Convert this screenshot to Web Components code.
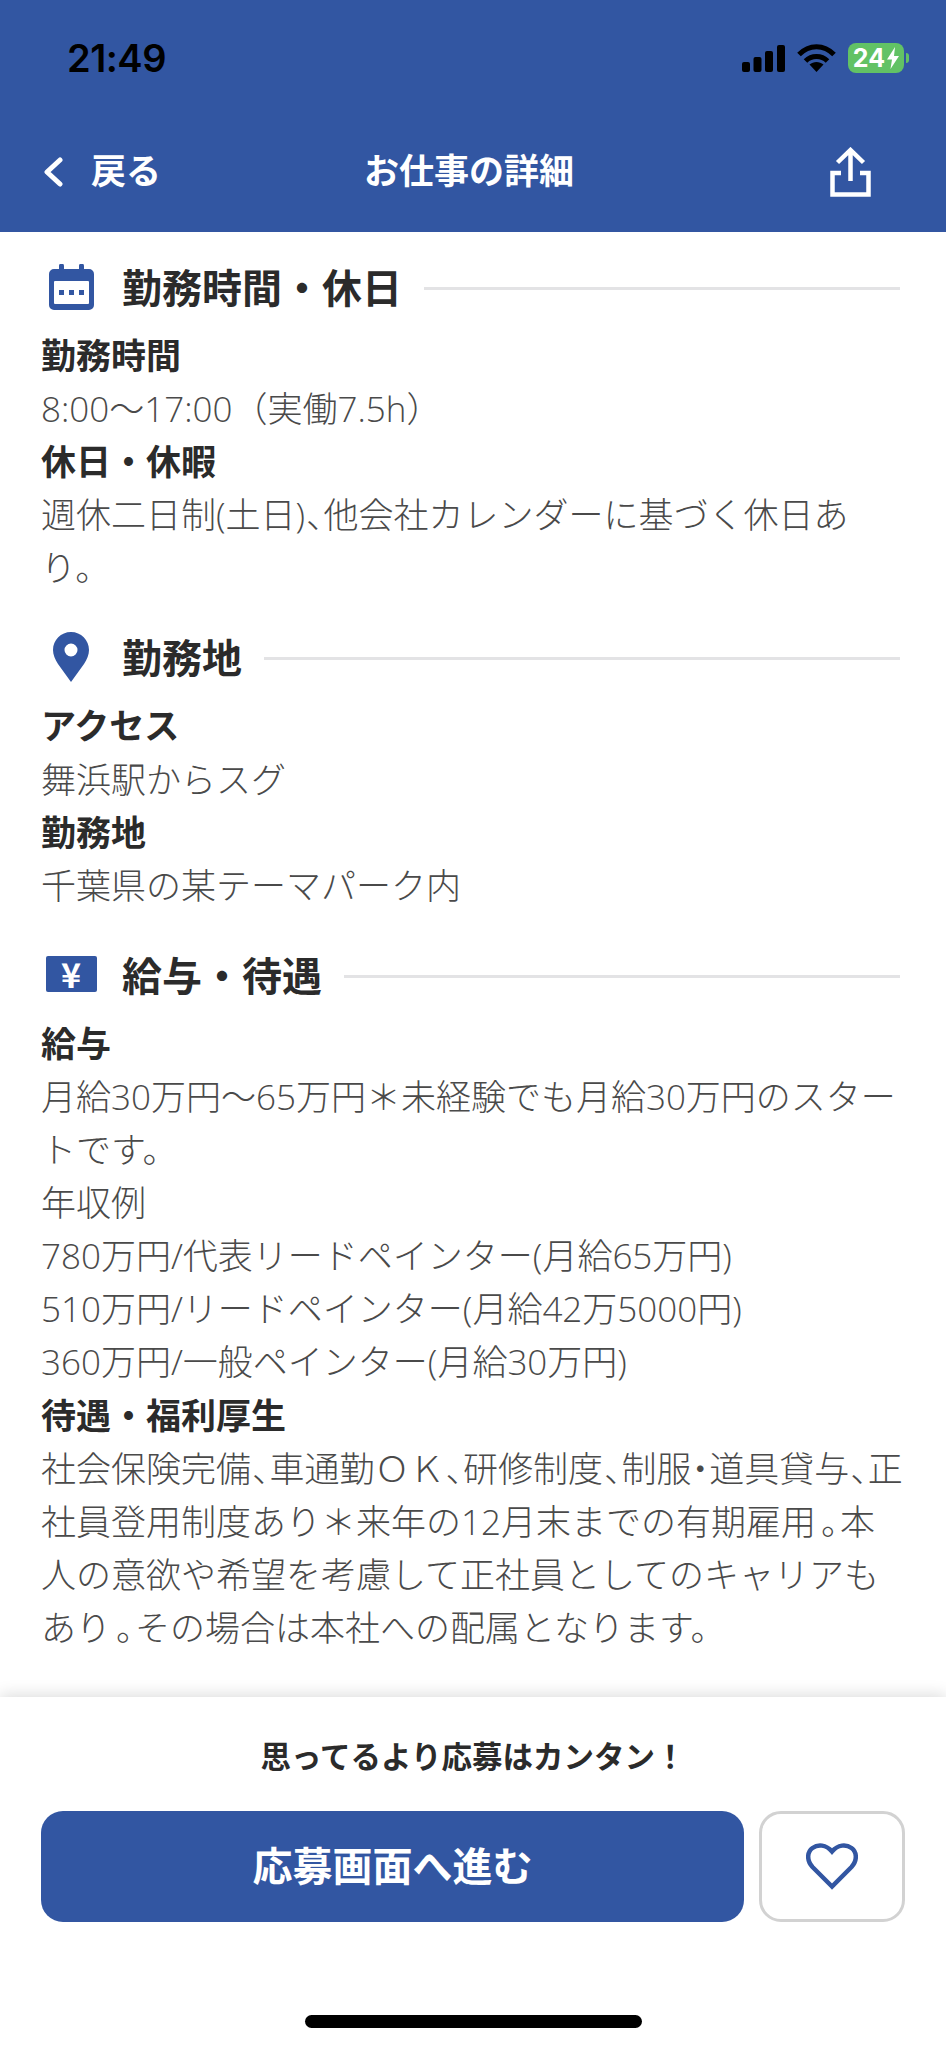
<!DOCTYPE html>
<html lang="ja">
<head>
<meta charset="utf-8">
<title>お仕事の詳細</title>
<style>
    html, body { margin: 0; padding: 0; background: #ffffff; }
    body {
        width: 946px;
        height: 2048px;
        overflow: hidden;
        font-family: "Noto Sans CJK JP", "Noto Sans", sans-serif;
    }
</style>
</head>
<body>
<job-detail-app>
    <app-header slot="header" title="お仕事の詳細" back="戻る"></app-header>

    <job-section heading="勤務時間・休日">
        <svg slot="icon" width="45" height="46" viewBox="0 0 45 46">
            <path fill="#3256a2" d="M10 5V2a2.500 2.500 0 0 1 5 0v3h15V2a2.500 2.500 0 0 1 5 0v3h5a5 5 0 0 1 5 5v31a5 5 0 0 1-5 5H5a5 5 0 0 1-5-5V10a5 5 0 0 1 5-5z"/>
            <rect x="5" y="17" width="35" height="23" rx="1" fill="#fff"/>
            <rect x="10" y="26" width="5" height="5" fill="#3256a2"/>
            <rect x="20" y="26" width="5" height="5" fill="#3256a2"/>
            <rect x="30" y="26" width="5" height="5" fill="#3256a2"/>
        </svg>
        <info-item label="勤務時間">8:00〜17:00（実働7.5h）</info-item>
        <info-item label="休日・休暇">週休二日制(土日)<i>、</i>他会社カレンダーに基づく休日あり。</info-item>
    </job-section>

    <job-section heading="勤務地">
        <svg slot="icon" width="36" height="50" viewBox="0 0 36 50">
            <path fill="#3256a2" fill-rule="evenodd" d="M18 0C8 0 0 8 0 18c0 5 2 9 5 14l13 18 13-18c3-5 5-9 5-14C36 8 28 0 18 0zm0 11.500a6.500 6.500 0 1 1 0 13 6.500 6.500 0 0 1 0-13z"/>
        </svg>
        <info-item label="アクセス">舞浜駅からスグ</info-item>
        <info-item label="勤務地">千葉県の某テーマパーク内</info-item>
    </job-section>

    <job-section heading="給与・待遇">
        <yen-badge slot="icon"></yen-badge>
        <info-item label="給与">月給30万円〜65万円＊未経験でも月給30万円のスタートです。<br>年収例<br>780万円/代表リードペインター(月給65万円)<br>510万円/リードペインター(月給42万5000円)<br>360万円/一般ペインター(月給30万円)</info-item>
        <info-item label="待遇・福利厚生">社会保険完備<i>、</i>車通勤ＯＫ<i>、</i>研修制度<i>、</i>制服<b>・</b>道具貸与<i>、</i>正社員登用制度あり＊来年の12月末までの有期雇用<u>。</u>本人の意欲や希望を考慮して正社員としてのキャリアもあり<u>。</u>その場合は本社への配属となります。</info-item>
    </job-section>

    <apply-footer slot="footer" lead="思ってるより応募はカンタン！" action="応募画面へ進む"></apply-footer>
</job-detail-app>

<script>
const BLUE = '#3256a2';

class JobDetailApp extends HTMLElement {
    constructor() {
        super();
        this.attachShadow({ mode: 'open' });
        this.shadowRoot.innerHTML = `
            <style>
                :host {
                    display: flex;
                    flex-direction: column;
                    width: 946px;
                    height: 2048px;
                    background: #ffffff;
                }
                main {
                    flex: 1;
                    min-height: 0;
                    display: flex;
                    flex-direction: column;
                    gap: 12px;
                    padding: 30px 41px 0;
                    overflow: hidden;
                }
            </style>
            <slot name="header"></slot>
            <main><slot></slot></main>
            <slot name="footer"></slot>
        `;
    }
}

class AppHeader extends HTMLElement {
    constructor() {
        super();
        this.attachShadow({ mode: 'open' });
    }

    connectedCallback() {
        this.shadowRoot.innerHTML = `
            <style>
                :host {
                    display: block;
                    height: 232px;
                    background: ${BLUE};
                    color: #ffffff;
                }
                .status {
                    height: 116px;
                    display: flex;
                    align-items: center;
                    justify-content: space-between;
                    padding: 0 42px 0 67px;
                }
                .time {
                    font: 600 38px/1 Inter, "Liberation Sans", sans-serif;
                    color: #000000;
                    letter-spacing: -0.5px;
                }
                .indicators {
                    display: flex;
                    align-items: center;
                    gap: 12px;
                }
                .battery {
                    display: flex;
                    align-items: center;
                    justify-content: center;
                    gap: 2px;
                    width: 56px;
                    height: 30px;
                    border-radius: 8px;
                    background: #62c265;
                    color: #ffffff;
                    font: 700 25px/1 Inter, "Liberation Sans", sans-serif;
                    position: relative;
                }
                .battery::after {
                    content: "";
                    position: absolute;
                    left: 58px;
                    top: 10px;
                    width: 3px;
                    height: 10px;
                    border-radius: 0 3px 3px 0;
                    background: #62c265;
                }
                .nav {
                    height: 112px;
                    display: grid;
                    grid-template-columns: 1fr auto 1fr;
                    align-items: center;
                    padding: 0 51px 0 43px;
                    font-size: 35px;
                    font-weight: 700;
                }
                .back {
                    display: flex;
                    align-items: center;
                    gap: 27px;
                }
                .back span, .title { padding-bottom: 7px; }
                .share { justify-self: end; display: block; margin-right: 24px; }
            </style>
            <div class="status">
                <span class="time">21:49</span>
                <div class="indicators">
                    <svg width="43" height="27" viewBox="0 0 43 27">
                        <rect x="0" y="17" width="8" height="10" rx="2"/>
                        <rect x="11.500" y="12" width="8" height="15" rx="2"/>
                        <rect x="23" y="6" width="8" height="21" rx="2"/>
                        <rect x="35" y="0" width="8" height="27" rx="2"/>
                    </svg>
                    <svg width="39" height="28" viewBox="0 0 39 28" fill="none" stroke="#000" stroke-width="5">
                        <path d="M2 10.500C12 0 27 0 37 10.500"/>
                        <path d="M8.500 17C14.500 11 24.500 11 30.500 17"/>
                        <path d="M19.500 28l-7-7.500c4-3.500 10-3.500 14 0z" fill="#000" stroke="none"/>
                    </svg>
                    <span class="battery">24<svg width="12" height="22" viewBox="0 0 12 22"><path fill="#fff" d="M8 0 0 12.500h5L3.500 22 12 9H7z"/></svg></span>
                </div>
            </div>
            <div class="nav">
                <div class="back">
                    <svg width="21" height="30" viewBox="0 0 21 30" fill="none" stroke="#fff" stroke-width="5" stroke-linecap="round" stroke-linejoin="round"><path d="M17 3 4 15l13 12"/></svg>
                    <span>${this.getAttribute('back')}</span>
                </div>
                <div class="title">${this.getAttribute('title')}</div>
                <svg class="share" width="41" height="50" viewBox="0 0 41 50" fill="none" stroke="#fff" stroke-width="4.500">
                    <path d="M20.500 34V3M7.500 15.500 20.500 3l13 12.500"/>
                    <path d="M11 26H2.500v21.500h36V26H30"/>
                </svg>
            </div>
        `;
    }
}

class JobSection extends HTMLElement {
    constructor() {
        super();
        this.attachShadow({ mode: 'open' });
    }

    connectedCallback() {
        this.shadowRoot.innerHTML = `
            <style>
                :host {
                    display: block;
                    padding-bottom: 26px;
                }
                .heading {
                    display: flex;
                    align-items: center;
                    height: 53px;
                    margin-bottom: 14px;
                }
                .icon {
                    flex: none;
                    width: 60px;
                    margin-right: 21px;
                    margin-bottom: 4px;
                    display: flex;
                    justify-content: center;
                    align-items: center;
                }
                h2 {
                    margin: 0 0 4px;
                    font-size: 40px;
                    line-height: 53px;
                    font-weight: 700;
                    color: #2b2b2b;
                    white-space: nowrap;
                }
                .rule {
                    flex: 1;
                    height: 3px;
                    margin-left: 22px;
                    margin-right: 5px;
                    background: #e3e3e5;
                }
            </style>
            <div class="heading">
                <div class="icon"><slot name="icon"></slot></div>
                <h2>${this.getAttribute('heading')}</h2>
                <div class="rule"></div>
            </div>
            <slot></slot>
        `;
    }
}

class YenBadge extends HTMLElement {
    constructor() {
        super();
        this.attachShadow({ mode: 'open' }).innerHTML = `
            <style>
                :host {
                    display: flex;
                    align-items: center;
                    justify-content: center;
                    width: 51px;
                    height: 36px;
                    border-radius: 2px;
                    background: ${BLUE};
                    color: #ffffff;
                    font: 700 34px/36px "Noto Sans CJK JP", sans-serif;
                }
            </style>
            <span>¥</span>
        `;
    }
}

class InfoItem extends HTMLElement {
    constructor() {
        super();
        this.attachShadow({ mode: 'open' });
    }

    connectedCallback() {
        this.shadowRoot.innerHTML = `
            <style>
                :host {
                    display: block;
                    font-size: 35px;
                    line-height: 53.100px;
                }
                .label {
                    line-height: 49.100px;
                    padding-bottom: 4px;
                    font-weight: 700;
                    color: #2b2b2b;
                }
                .body {
                    font-family: "Open Sans", "Noto Sans CJK JP", sans-serif;
                    font-weight: 300;
                    color: #4a4a4a;
                }
                /* punctuation sits tight in the reference */
                ::slotted(i) {
                    font-style: normal;
                    margin-left: 1px;
                    letter-spacing: -17.500px;
                }
                ::slotted(b) {
                    font-weight: inherit;
                    font-feature-settings: "halt";
                }
                ::slotted(u) {
                    text-decoration: none;
                    margin-left: 5px;
                    letter-spacing: -16px;
                }
            </style>
            <div class="label">${this.getAttribute('label')}</div>
            <div class="body"><slot></slot></div>
        `;
    }
}

class ApplyFooter extends HTMLElement {
    constructor() {
        super();
        this.attachShadow({ mode: 'open' });
    }

    connectedCallback() {
        this.shadowRoot.innerHTML = `
            <style>
                :host {
                    display: block;
                    height: 351px;
                    box-sizing: border-box;
                    padding: 36px 41px 20px;
                    background: #ffffff;
                    box-shadow: 0 -3px 14px rgba(0, 0, 0, 0.13);
                    position: relative;
                }
                .lead {
                    text-align: center;
                    font-size: 30.500px;
                    line-height: 44px;
                    font-weight: 700;
                    color: #2b2b2b;
                }
                .actions {
                    display: flex;
                    gap: 15px;
                    margin-top: 34px;
                }
                .apply {
                    flex: 1;
                    height: 111px;
                    box-sizing: border-box;
                    padding-bottom: 5px;
                    display: flex;
                    align-items: center;
                    justify-content: center;
                    border-radius: 22px;
                    background: ${BLUE};
                    color: #ffffff;
                    font-size: 40px;
                    font-weight: 700;
                }
                .fav {
                    flex: none;
                    width: 146px;
                    height: 111px;
                    box-sizing: border-box;
                    display: flex;
                    align-items: center;
                    justify-content: center;
                    border: 3px solid #d2d2d2;
                    border-radius: 22px;
                }
                .home {
                    width: 337px;
                    height: 13px;
                    margin: 93px auto 0;
                    border-radius: 7px;
                    background: #000000;
                }
            </style>
            <div class="lead">${this.getAttribute('lead')}</div>
            <div class="actions">
                <div class="apply">${this.getAttribute('action')}</div>
                <div class="fav">
                    <svg width="52" height="47" viewBox="0 0 52 47" fill="none" stroke="${BLUE}" stroke-width="4.500" stroke-linejoin="miter">
                        <path d="M26 43.500 6.500 24C.5 17.500 1 9 6.500 5 12 1 20 1.500 26 8.500 32 1.500 40 1 45.500 5 51 9 51.500 17.500 45.500 24z"/>
                    </svg>
                </div>
            </div>
            <div class="home"></div>
        `;
    }
}

customElements.define('job-detail-app', JobDetailApp);
customElements.define('app-header', AppHeader);
customElements.define('job-section', JobSection);
customElements.define('yen-badge', YenBadge);
customElements.define('info-item', InfoItem);
customElements.define('apply-footer', ApplyFooter);
</script>
</body>
</html>
